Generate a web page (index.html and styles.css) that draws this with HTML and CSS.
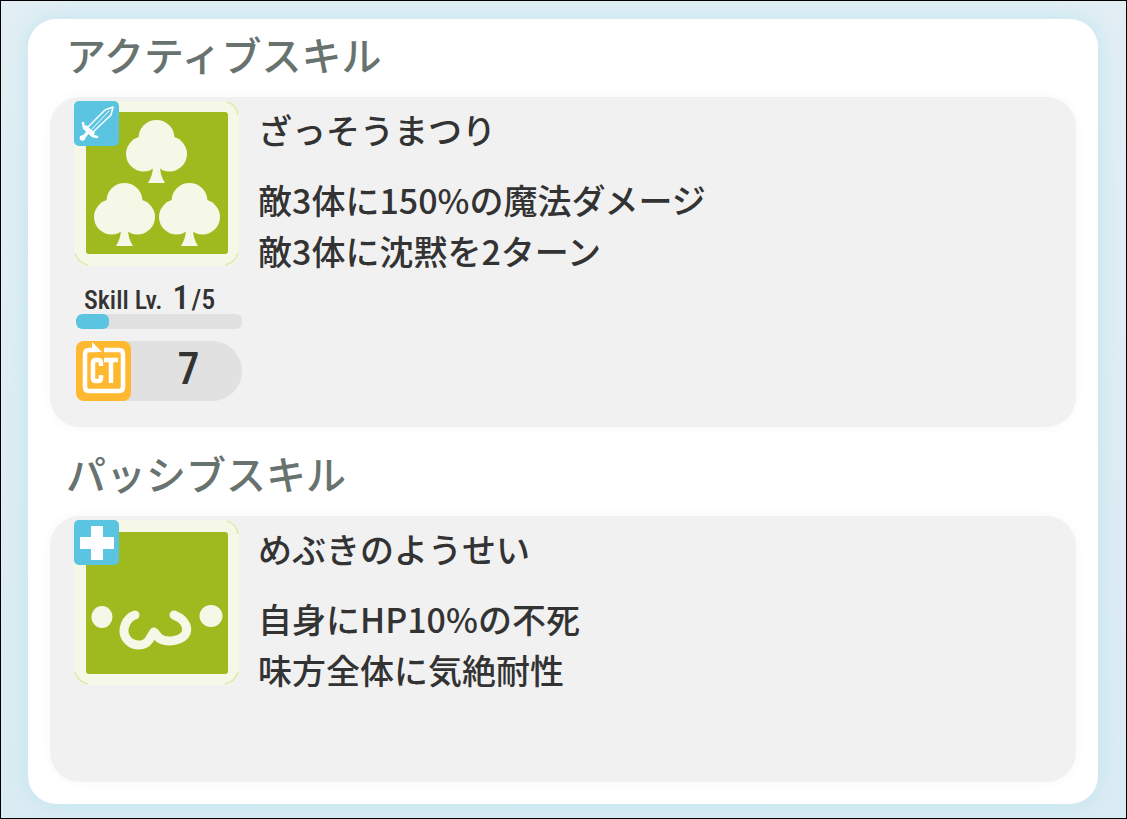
FILE: index.html
```
<!DOCTYPE html>
<html lang="ja">
<head>
<meta charset="utf-8">
<meta name="viewport" content="width=device-width, initial-scale=1">
<title>スキル</title>
<link rel="stylesheet" href="styles.css">
</head>
<body>
<main class="card">
  <section class="skill-section">
    <h2 class="section-title">アクティブスキル</h2>
    <article class="panel">
      <div class="side">
        <div class="art">
          <svg class="art-image" viewBox="0 0 165 165" aria-hidden="true">
            <defs>
              <g id="club">
                <circle cx="30.500" cy="18" r="18"/>
                <circle cx="17.500" cy="34" r="17.500"/>
                <circle cx="43.500" cy="34" r="17.500"/>
                <path d="M27 45h7c0 8 2 13 5 18H22c3-5 5-10 5-18z"/>
              </g>
            </defs>
            <rect width="165" height="165" rx="14" fill="#f5f8e6"/>
            <path d="M153 1q10 3 11 13M1 152q3 10 13 12M164 152q-3 10-13 12" fill="none" stroke="#dfe8b0" stroke-width="1.500"/>
            <rect x="12" y="11" width="142" height="142" rx="3" fill="#9fba1f"/>
            <g fill="#f5f8e6">
              <use href="#club" x="52" y="19"/>
              <use href="#club" x="20" y="82"/>
              <use href="#club" x="85" y="82"/>
            </g>
          </svg>
          <svg class="type-badge" viewBox="0 0 45 45" role="img" aria-label="攻撃">
            <rect width="45" height="45" rx="5" fill="#5bc5e1"/>
            <g fill="none" stroke="#fff" stroke-linejoin="round" stroke-linecap="round">
              <path d="M14 26L31 9l8-3-2 8-18 17" stroke-width="1.500"/>
              <path d="M18 28L35 10" stroke-width="1"/>
              <path d="M9 22l1 5 9 8 4 1" stroke-width="2.500"/>
              <path d="M14 31l-5 6" stroke-width="3.500"/>
            </g>
            <path d="M12 24l9 8-3 4-9-9z" fill="#fff"/>
            <circle cx="8.500" cy="37" r="2.800" fill="#fff"/>
          </svg>
        </div>
        <div class="level">
          <label class="level-label" for="level">Skill Lv. <span class="level-now">1</span><span class="level-max">/5</span></label>
          <progress class="level-bar" id="level" value="1" max="5"></progress>
        </div>
        <div class="cooldown">
          <svg class="ct-icon" viewBox="0 0 55 60" role="img" aria-label="CT">
            <rect width="55" height="60" rx="8" fill="#ffb931"/>
            <path d="M28 9h15q4 0 4 4v33q0 4-4 4H13q-4 0-4-4V13q0-4 4-4h8" fill="none" stroke="#fff" stroke-width="4.500"/>
            <path d="M16 1l10 10H16z" fill="#fff"/>
            <g fill="none" stroke="#fff" stroke-width="4.500">
              <path d="M25 25v-3q0-3-3-3h-2q-3 0-3 3v15q0 3 3 3h2q3 0 3-3v-3"/>
              <path d="M28 19h14M35 19v23"/>
            </g>
          </svg>
          <span class="ct-value">7</span>
        </div>
      </div>
      <div class="details">
        <h3 class="skill-name">ざっそうまつり</h3>
        <p class="effect">敵3体に150%の魔法ダメージ</p>
        <p class="effect">敵3体に沈黙を2ターン</p>
      </div>
    </article>
  </section>
  <section class="skill-section">
    <h2 class="section-title">パッシブスキル</h2>
    <article class="panel">
      <div class="side">
        <div class="art">
          <svg class="art-image" viewBox="0 0 165 165" aria-hidden="true">
            <rect width="165" height="165" rx="14" fill="#f5f8e6"/>
            <path d="M153 1q10 3 11 13M1 152q3 10 13 12M164 152q-3 10-13 12" fill="none" stroke="#dfe8b0" stroke-width="1.500"/>
            <rect x="12" y="12" width="142" height="142" rx="3" fill="#9fba1f"/>
            <g fill="#f5f8e6">
              <ellipse cx="28" cy="97" rx="10.500" ry="11"/>
              <ellipse cx="137" cy="96" rx="11.500" ry="11"/>
            </g>
            <path d="M61 95C52 98 47 110 52 118C58 127 70 127 75 120L80 112L85 118C94 124 109 120 112 113C115 105 108 98 100 95" fill="none" stroke="#f5f8e6" stroke-width="9" stroke-linecap="round" stroke-linejoin="round"/>
          </svg>
          <svg class="type-badge" viewBox="0 0 45 45" role="img" aria-label="支援">
            <rect width="45" height="45" rx="5" fill="#5bc5e1"/>
            <path d="M17 6h12v11h11v12H29v11H17V29H6V17h11z" fill="#fff"/>
          </svg>
        </div>
      </div>
      <div class="details">
        <h3 class="skill-name">めぶきのようせい</h3>
        <p class="effect">自身にHP10%の不死</p>
        <p class="effect">味方全体に気絶耐性</p>
      </div>
    </article>
  </section>
</main>
</body>
</html>
```

FILE: styles.css
```
* {
  box-sizing: border-box;
}

body {
  margin: 0;
  min-height: 100vh;
  padding: 18px 28px 14px 27px;
  border: 1px solid #000;
  background: linear-gradient(#e2eef4, #dbebf3);
  color: #333;
  font-family: "Noto Sans CJK JP", sans-serif;
  font-weight: 500;
}

.card {
  padding: 0 22px 22px;
  border-radius: 28px;
  background: #fff;
  box-shadow: 0 0 22px #bfe5ef;
}

.section-title {
  margin: 0;
  padding: 0 16px 8px;
  color: #68736f;
  font-size: 40px;
  font-weight: 500;
  line-height: 70px;
}

.skill-section + .skill-section .section-title {
  padding-top: 11px;
}

.panel {
  display: flex;
  gap: 16px;
  min-height: 266px;
  padding: 4px 24px 26px;
  border-radius: 30px;
  background: #f1f1f1;
  box-shadow: 0 0 14px #f8f8f8;
}

.side {
  flex: none;
  width: 168px;
}

.art {
  position: relative;
  width: 165px;
}

.art-image {
  display: block;
  width: 100%;
}

.type-badge {
  position: absolute;
  top: 0;
  left: 0;
  width: 45px;
}

.level {
  display: flex;
  flex-direction: column;
  padding: 14px 0 12px 2px;
}

.level-label {
  display: flex;
  align-items: baseline;
  height: 34px;
  padding-left: 8px;
  font-family: "Liberation Sans Narrow", "Roboto Condensed", "Liberation Sans", sans-serif;
  font-size: 26px;
  line-height: 34px;
  white-space: nowrap;
}

.level-now {
  margin: 0 2px 0 10px;
  font-size: 34px;
}

.level-max {
  font-size: 28px;
}

.level-bar {
  width: 100%;
  height: 15px;
  border: 0;
  border-radius: 6px;
  overflow: hidden;
  appearance: none;
  background: #e1e1e1;
}

.level-bar::-webkit-progress-bar {
  background: #e1e1e1;
}

.level-bar::-webkit-progress-value {
  border-radius: 6px;
  background: #5bc5e1;
}

.cooldown {
  display: flex;
  align-items: center;
  margin-left: 2px;
  border-radius: 8px 30px 30px 8px;
  background: #e1e1e1;
}

.ct-icon {
  flex: none;
  width: 55px;
}

.ct-value {
  flex: 1;
  padding: 0 0 4px 4px;
  font-family: "Liberation Sans Narrow", "Roboto Condensed", "Liberation Sans", sans-serif;
  font-size: 44px;
  line-height: 56px;
  text-align: center;
}

.details {
  flex: 1;
  min-width: 0;
}

.skill-name {
  margin: 0 0 15px;
  font-size: 34px;
  font-weight: 500;
  line-height: 58px;
}

.effect {
  margin: 0;
  font-size: 34px;
  line-height: 51px;
}
```
